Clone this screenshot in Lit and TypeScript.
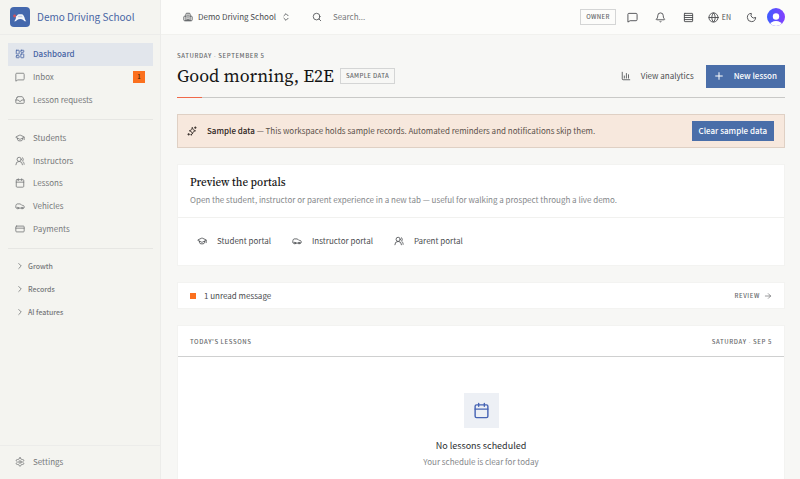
import { LitElement, html, css, svg } from "lit";
import { customElement, property } from "lit/decorators.js";

const glyphs: Record<string, unknown> = {
  dashboard: svg`<rect width="7" height="9" x="3" y="3" rx="1"/><rect width="7" height="5" x="14" y="3" rx="1"/><rect width="7" height="9" x="14" y="12" rx="1"/><rect width="7" height="5" x="3" y="16" rx="1"/>`,
  message: svg`<path d="M22 17a2 2 0 0 1-2 2H6.800l-4.800 3V5a2 2 0 0 1 2-2h16a2 2 0 0 1 2 2z"/>`,
  inbox: svg`<path d="M22 12h-6l-2 3h-4l-2-3H2"/><path d="M5.45 5.11 2 12v6a2 2 0 0 0 2 2h16a2 2 0 0 0 2-2v-6l-3.45-6.89A2 2 0 0 0 16.76 4H7.24a2 2 0 0 0-1.79 1.11z"/>`,
  student: svg`<path d="M21.42 10.922a1 1 0 0 0-.019-1.838L12.83 5.18a2 2 0 0 0-1.66 0L2.6 9.08a1 1 0 0 0 0 1.832l8.57 3.908a2 2 0 0 0 1.66 0z"/><path d="M22 10v6"/><path d="M6 12.5V16a6 3 0 0 0 12 0v-3.500"/>`,
  users: svg`<path d="M18 21a8 8 0 0 0-16 0"/><circle cx="10" cy="8" r="5"/><path d="M22 20c0-3.370-2-6.500-4-8a5 5 0 0 0-.450-8.300"/>`,
  calendar: svg`<path d="M8 2v4M16 2v4"/><rect width="18" height="18" x="3" y="4" rx="2"/><path d="M3 10h18"/>`,
  car: svg`<path d="M19 17h2c.6 0 1-.4 1-1v-3c0-.9-.7-1.700-1.500-1.900C18.700 10.600 16 10 16 10s-1.300-1.400-2.200-2.300c-.5-.4-1.100-.7-1.800-.7H5c-.6 0-1.100.4-1.400.9l-1.400 2.900A3.700 3.700 0 0 0 2 12v4c0 .6.4 1 1 1h2"/><circle cx="7" cy="17" r="2"/><path d="M9 17h6"/><circle cx="17" cy="17" r="2"/>`,
  card: svg`<rect width="20" height="14" x="2" y="5" rx="2"/><path d="M2 10h20"/>`,
  chevron: svg`<path d="m9 18 6-6-6-6"/>`,
  updown: svg`<path d="m7 15 5 5 5-5"/><path d="m7 9 5-5 5 5"/>`,
  gear: svg`<path d="M12.220 2h-.440a2 2 0 0 0-2 2v.180a2 2 0 0 1-1 1.730l-.430.250a2 2 0 0 1-2 0l-.150-.080a2 2 0 0 0-2.730.730l-.220.380a2 2 0 0 0 .730 2.730l.150.100a2 2 0 0 1 1 1.720v.510a2 2 0 0 1-1 1.740l-.150.090a2 2 0 0 0-.730 2.730l.220.380a2 2 0 0 0 2.730.730l.150-.080a2 2 0 0 1 2 0l.430.250a2 2 0 0 1 1 1.730V20a2 2 0 0 0 2 2h.440a2 2 0 0 0 2-2v-.180a2 2 0 0 1 1-1.730l.430-.250a2 2 0 0 1 2 0l.150.080a2 2 0 0 0 2.730-.730l.220-.390a2 2 0 0 0-.730-2.730l-.150-.080a2 2 0 0 1-1-1.740v-.500a2 2 0 0 1 1-1.740l.150-.090a2 2 0 0 0 .730-2.730l-.220-.380a2 2 0 0 0-2.730-.730l-.150.080a2 2 0 0 1-2 0l-.430-.250a2 2 0 0 1-1-1.730V4a2 2 0 0 0-2-2z"/><circle cx="12" cy="12" r="3"/>`,
  building: svg`<path d="M7 21V5a2 2 0 0 1 2-2h6a2 2 0 0 1 2 2v16"/><path d="M7 10H4a2 2 0 0 0-2 2v7a2 2 0 0 0 2 2h16a2 2 0 0 0 2-2v-7a2 2 0 0 0-2-2h-3"/><path d="M10.500 7.500h3M10.500 12h3M10 21v-4h4v4"/>`,
  search: svg`<circle cx="11" cy="11" r="8"/><path d="m21 21-4.300-4.300"/>`,
  bell: svg`<path d="M10.268 21a2 2 0 0 0 3.464 0"/><path d="M3.262 15.326A1 1 0 0 0 4 17h16a1 1 0 0 0 .740-1.673C19.410 13.956 18 12.499 18 8A6 6 0 0 0 6 8c0 4.499-1.411 5.956-2.738 7.326"/>`,
  rows: svg`<rect width="18" height="18" x="3" y="3" rx="1"/><path d="M3 7.500h18M3 12h18M3 16.500h18"/>`,
  globe: svg`<circle cx="12" cy="12" r="10"/><path d="M12 2a14.500 14.500 0 0 0 0 20 14.500 14.500 0 0 0 0-20"/><path d="M2 12h20"/>`,
  moon: svg`<path d="M20.985 12.486a9 9 0 1 1-9.473-9.472c.405-.022.617.460.402.803a6 6 0 0 0 8.268 8.268c.344-.215.825-.004.803.401"/>`,
  chart: svg`<path d="M3 3v16a2 2 0 0 0 2 2h16"/><path d="M8 17v-5M13 17V6M18 17V9"/>`,
  plus: svg`<path d="M4 12h16M12 4v16" stroke-width="2.400"/>`,
  sparkles: svg`<path d="M13 4 14.700 8.300a2 2 0 0 0 1.200 1.200L20.500 11.500 16 13.300a2 2 0 0 0-1.200 1.200L13 19l-1.800-4.500A2 2 0 0 0 10 13.300L5.500 11.500 10 9.600a2 2 0 0 0 1.200-1.200z"/><path d="M20 2v4M22 4h-4M4 18v4M6 20H2"/><circle cx="10" cy="21" r="1"/>`,
  arrow: svg`<path d="M4 12h16M13 5l7 7-7 7"/>`,
};

@customElement("ui-icon")
export class UiIcon extends LitElement {
  @property() name = "";
  static styles = css`
    :host { display: block; flex: none; width: 10px; height: 10px; }
    .glyph { display: block; width: 100%; height: 100%; overflow: visible; }
  `;
  render() {
    return html`<svg class="glyph" viewBox="0 0 24 24" fill="none" stroke="currentColor" stroke-width="2" stroke-linecap="round" stroke-linejoin="round" aria-hidden="true">${glyphs[this.name]}</svg>`;
  }
}

interface Item { icon: string; label: string; active?: boolean; count?: number; }

@customElement("app-root")
export class AppRoot extends LitElement {
  private primary: Item[] = [
    { icon: "dashboard", label: "Dashboard", active: true },
    { icon: "message", label: "Inbox", count: 1 },
    { icon: "inbox", label: "Lesson requests" },
  ];
  private records: Item[] = [
    { icon: "student", label: "Students" },
    { icon: "users", label: "Instructors" },
    { icon: "calendar", label: "Lessons" },
    { icon: "car", label: "Vehicles" },
    { icon: "card", label: "Payments" },
  ];
  private portals: Item[] = [
    { icon: "student", label: "Student portal" },
    { icon: "car", label: "Instructor portal" },
    { icon: "users", label: "Parent portal" },
  ];

  static styles = css`
    :host {
      display: grid;
      grid-template: minmax(0, 1fr) / 161px minmax(0, 1fr);
      height: 100vh;
      background: #f7f7f5;
      color: #4b4d50;
      font: 400 8px/12px "Noto Sans CJK SC", "Noto Sans", sans-serif;
    }
    * { box-sizing: border-box; }
    h1, h2, h3, p { margin: 0; font-weight: 400; }
    a { color: inherit; text-decoration: none; }
    button, input {
      margin: 0; padding: 0; border: 0; background: none;
      font: inherit; color: inherit; letter-spacing: inherit;
    }
    button { display: flex; align-items: center; }

    .sidebar {
      display: flex; flex-direction: column;
      background: #f4f4f0; border-right: 1px solid #ececea; color: #77797b;
    }
    .brand {
      display: flex; align-items: center; gap: 7px; flex: none;
      height: 35px; padding-left: 10px;
      border-bottom: 1px solid #ececea;
      color: #4764a4; font-size: 10px;
    }
    .logo { display: block; width: 20px; height: 20px; }
    .nav { flex: 1; padding: 8px 7px 8px 8px; }
    .group { display: grid; grid-auto-rows: 1fr; height: 68px; }
    .group.long { height: 113px; }
    .rule { height: 1px; margin: 8px 0 7px; border: 0; background: #e6e6e3; }
    .group.long + .rule { margin-bottom: 6px; }
    .item { display: flex; align-items: center; gap: 8px; padding: 0 8px 0 7px; }
    .item.active { background: #e2e6ec; color: #4764a4; font-weight: 500; }
    .label { flex: 1; }
    .count {
      width: 12px; height: 12px; background: #fb701e; color: #40200c;
      font-size: 6px; font-weight: 500; text-align: center;
    }
    .fold { gap: 3px; font-size: 7px; line-height: 10px; text-align: left; font-weight: 500; }
    .foot { flex: none; height: 34px; padding: 0 8px; border-top: 1px solid #ececea; }
    .foot .item { height: 32px; }

    .page { display: flex; flex-direction: column; min-width: 0; }
    .topbar {
      display: flex; align-items: center; flex: none;
      height: 35px; padding: 0 15px 0 22px;
      background: #fcfcfa; border-bottom: 1px solid #f1f1ee;
    }
    .org { gap: 5px; }
    .search { display: flex; align-items: center; gap: 11px; flex: 1; margin-left: 21px; }
    .field { width: 100%; color: #77797b; outline: 0; }
    .field::placeholder { color: #77797b; opacity: 1; }
    .tools { display: flex; align-items: center; gap: 17px; }
    .tools ui-icon { width: 11px; height: 11px; }
    .tag {
      padding: 0 5px; border: 1px solid #d4d5d5; color: #66686b;
      font-size: 6px; line-height: 14px; font-weight: 500; letter-spacing: 0.06em;
      text-transform: uppercase; white-space: nowrap;
    }
    .tools .tag { margin-right: -6px; }
    .lang { gap: 3px; font-size: 7px; margin: 0 -2px 0 -3px; }
    .avatar { margin-left: -7px; }
    .face { display: block; width: 18px; height: 18px; }

    .content {
      display: flex; flex-direction: column; gap: 16px; flex: 1; min-height: 0;
      padding: 15px 15px 0 16px; overflow-y: auto; scrollbar-width: none;
    }
    .content > * { flex: none; }
    .caps {
      color: #66686b; font-size: 6px; line-height: 11px; font-weight: 500;
      letter-spacing: 0.1em; text-transform: uppercase;
    }
    .sep { font-family: "Open Sans", sans-serif; line-height: 0; }
    .hero::after {
      content: ""; display: block; height: 1px;
      background: linear-gradient(90deg, #f0694a 25px, #c9c9c7 25px);
    }
    .headline { display: flex; align-items: center; gap: 6px; height: 36px; padding-bottom: 6px; }
    .title {
      color: #141414; font: 400 18px/24px "Source Serif 4", "Noto Serif CJK SC", "Liberation Serif", serif;
      white-space: nowrap;
    }
    .actions { display: flex; align-items: center; gap: 12px; margin-left: auto; }
    .ghost { gap: 10px; }
    .solid { justify-content: center; background: #4a6ea9; color: #fff; font-weight: 500; }
    .create { gap: 10px; height: 23px; padding: 0 8px; }

    .notice {
      display: flex; align-items: center; gap: 10px; height: 34px; padding: 0 10px 0 9px;
      background: #f7e8dd; border: 1px solid #dfd0c4; color: #5b514b;
    }
    .notice ui-icon { color: #2c2420; }
    .strong { color: #2c2420; font-weight: 500; }
    .clear { height: 20px; padding: 0 7px; margin-left: auto; }

    .card { background: #fff; border: 1px solid #f3f3f1; }
    .intro { padding: 11px 12px; border-bottom: 1px solid #f1f1ef; }
    .subtitle { color: #141414; font: 500 11px/14px "Source Serif 4", "Noto Serif CJK SC", "Liberation Serif", serif; }
    .muted { color: #85878a; }
    .intro .muted { margin-top: 4px; }
    .portals { display: flex; gap: 21px; padding: 17px 19px 18px; }
    .portal { display: flex; align-items: center; gap: 10px; }
    .alert { display: flex; align-items: center; justify-content: space-between; height: 27px; padding: 0 12px; }
    .unread { display: flex; align-items: center; gap: 8px; }
    .dot { width: 6px; height: 6px; background: #fb701e; }
    .more { display: flex; align-items: center; gap: 4px; }
    .more ui-icon { width: 8px; height: 8px; }
    .day { display: flex; justify-content: space-between; align-items: center; height: 31px; padding: 0 12px; border-bottom: 1px solid #cfd0d0; }
    .empty { display: flex; flex-direction: column; align-items: center; padding: 36px 0 24px; }
    .tile { display: grid; place-items: center; width: 35px; height: 35px; margin-bottom: 10px; background: #edf0f5; color: #4764b4; }
    .tile ui-icon { width: 17px; height: 17px; }
    .none { color: #2b2d30; font-size: 9px; line-height: 15px; margin-bottom: 3px; }
  `;

  private link(item: Item) {
    return html`<a class="item ${item.active ? "active" : ""}" href="#">
      <ui-icon name=${item.icon}></ui-icon><span class="label">${item.label}</span>
      ${item.count ? html`<span class="count">${item.count}</span>` : ""}
    </a>`;
  }

  render() {
    return html`
      <aside class="sidebar">
        <a class="brand" href="#">
          <svg class="logo" viewBox="0 0 20 20" aria-hidden="true">
            <rect width="20" height="20" rx="4" fill="#4468ad"/>
            <path d="M4 14.200C5.400 13.600 5.600 12 6.200 10.600L5 9.800c1-.2 1.700-.6 2.300-1.500.5-.8 1.200-1.100 2-1.100h2.200c.9 0 1.600.4 2 1.200l1 2.200c.3 1.500.7 2.800 1.800 3.600-1.400.3-2.300-.2-3-1.300-1.700-1.200-4.500-1.200-6.200 0-.8 1.100-1.800 1.500-3.100 1.300z" fill="#f5f7fb"/>
            <path d="M7.500 10.300 8.400 8.700h3.400l1 1.600z" fill="#c3d0e8"/>
            <circle cx="4.600" cy="9" r="1.400" fill="#d6525a"/>
          </svg>
          <span>Demo Driving School</span>
        </a>
        <nav class="nav">
          <div class="group">${this.primary.map((i) => this.link(i))}</div>
          <hr class="rule" />
          <div class="group long">${this.records.map((i) => this.link(i))}</div>
          <hr class="rule" />
          <div class="group">
            ${["Growth", "Records", "AI features"].map(
              (t) => html`<button class="item fold" aria-expanded="false"><ui-icon name="chevron"></ui-icon>${t}</button>`
            )}
          </div>
        </nav>
        <div class="foot">${this.link({ icon: "gear", label: "Settings" })}</div>
      </aside>
      <div class="page">
        <header class="topbar">
          <button class="org"><ui-icon name="building"></ui-icon>Demo Driving School<ui-icon name="updown"></ui-icon></button>
          <label class="search">
            <ui-icon name="search"></ui-icon>
            <input class="field" type="search" placeholder="Search..." aria-label="Search" />
          </label>
          <div class="tools">
            <span class="tag">Owner</span>
            <button aria-label="Messages"><ui-icon name="message"></ui-icon></button>
            <button aria-label="Notifications"><ui-icon name="bell"></ui-icon></button>
            <button aria-label="Density"><ui-icon name="rows"></ui-icon></button>
            <button class="lang"><ui-icon name="globe"></ui-icon>EN</button>
            <button aria-label="Theme"><ui-icon name="moon"></ui-icon></button>
            <button class="avatar" aria-label="Account">
              <svg class="face" viewBox="0 0 18 18" aria-hidden="true">
                <defs>
                  <linearGradient id="tint" x1="0" y1="0" x2="1" y2="0"><stop offset="0" stop-color="#3d5cff"/><stop offset="1" stop-color="#8440ff"/></linearGradient>
                  <clipPath id="round"><circle cx="9" cy="9" r="9"/></clipPath>
                </defs>
                <g clip-path="url(#round)">
                  <rect width="18" height="18" fill="url(#tint)"/>
                  <circle cx="9" cy="8.500" r="3.200" fill="#fff"/>
                  <ellipse cx="9" cy="17" rx="6" ry="4" fill="#fff"/>
                </g>
              </svg>
            </button>
          </div>
        </header>
        <main class="content">
          <section class="hero">
            <p class="caps">Saturday<span class="sep"> · </span>September 5</p>
            <div class="headline">
              <h1 class="title">Good morning, E2E</h1>
              <span class="tag">Sample data</span>
              <div class="actions">
                <button class="ghost"><ui-icon name="chart"></ui-icon>View analytics</button>
                <button class="solid create"><ui-icon name="plus"></ui-icon>New lesson</button>
              </div>
            </div>
          </section>
          <section class="notice">
            <ui-icon name="sparkles"></ui-icon>
            <p><span class="strong">Sample data</span> — This workspace holds sample records. Automated reminders and notifications skip them.</p>
            <button class="solid clear">Clear sample data</button>
          </section>
          <section class="card">
            <div class="intro">
              <h2 class="subtitle">Preview the portals</h2>
              <p class="muted">Open the student, instructor or parent experience in a new tab — useful for walking a prospect through a live demo.</p>
            </div>
            <div class="portals">
              ${this.portals.map((p) => html`<a class="portal" href="#"><ui-icon name=${p.icon}></ui-icon>${p.label}</a>`)}
            </div>
          </section>
          <section class="card alert">
            <span class="unread"><span class="dot"></span>1 unread message</span>
            <a class="caps more" href="#">Review<ui-icon name="arrow"></ui-icon></a>
          </section>
          <section class="card">
            <div class="day"><h2 class="caps">Today's lessons</h2><span class="caps">Saturday<span class="sep"> · </span>Sep 5</span></div>
            <div class="empty">
              <span class="tile"><ui-icon name="calendar"></ui-icon></span>
              <h3 class="none">No lessons scheduled</h3>
              <p class="muted">Your schedule is clear for today</p>
            </div>
          </section>
        </main>
      </div>
    `;
  }
}
